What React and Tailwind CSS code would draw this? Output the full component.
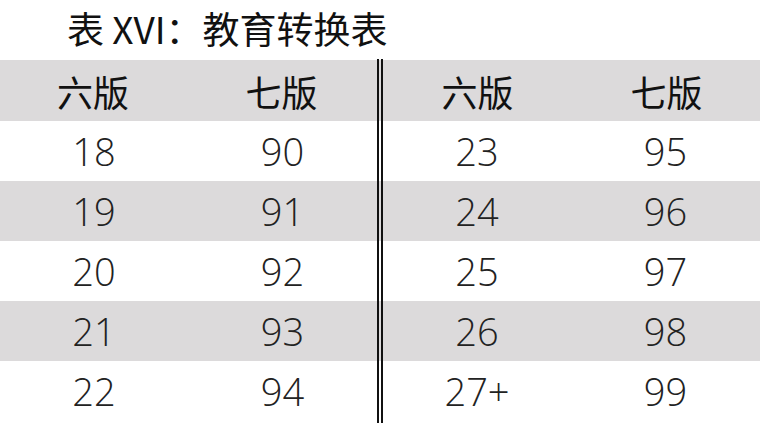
import React from "react";

const rows = [
  ["18", "90", "23", "95"],
  ["19", "91", "24", "96"],
  ["20", "92", "25", "97"],
  ["21", "93", "26", "98"],
  ["22", "94", "27+", "99"],
];

const grid = "grid grid-cols-[188px_189px_6px_188px_189px]";

const Divider = () => <div className="border-x-2 border-[#111]" />;

export default function App() {
  return (
    <div className="w-[760px] h-[425px] bg-white overflow-hidden">
      {/* Title */}
      <div className="h-[59px] flex items-center pl-[67px]">
        <h1
          className="text-[37px] leading-none text-[#111] pb-[2px]"
          style={{ fontFamily: '"Noto Sans CJK SC", "Noto Sans", sans-serif' }}
        >
          表 XVI：教育转换表
        </h1>
      </div>

      <div className={grid}>
        <div className="col-span-2 h-px" />
        <Divider />
        <div className="col-span-2 h-px" />
      </div>

      {/* Header */}
      <div
        className={`${grid} h-[61px] bg-[#dcdadb] text-[36px] text-[#111]`}
        style={{ fontFamily: '"Noto Sans CJK SC", sans-serif' }}
      >
        <div className="flex items-center justify-center pr-[2px]">六版</div>
        <div className="flex items-center justify-center pr-[2px]">七版</div>
        <Divider />
        <div className="flex items-center justify-center pl-[1px]">六版</div>
        <div className="flex items-center justify-center pl-[2px]">七版</div>
      </div>

      {/* Body */}
      {rows.map((r, i) => (
        <div
          key={i}
          className={`${grid} h-[60px] text-[38px] font-light text-[#222] ${
            i % 2 === 1 ? "bg-[#dcdadb]" : "bg-white"
          }`}
          style={{ fontFamily: '"Open Sans", sans-serif' }}
        >
          <div className="flex items-center justify-center">{r[0]}</div>
          <div className="flex items-center justify-center">{r[1]}</div>
          <Divider />
          <div className="flex items-center justify-center">{r[2]}</div>
          <div className="flex items-center justify-center">{r[3]}</div>
        </div>
      ))}

      <div className={`${grid} h-[2px]`}>
        <div className="col-span-2" />
        <Divider />
        <div className="col-span-2" />
      </div>
    </div>
  );
}
